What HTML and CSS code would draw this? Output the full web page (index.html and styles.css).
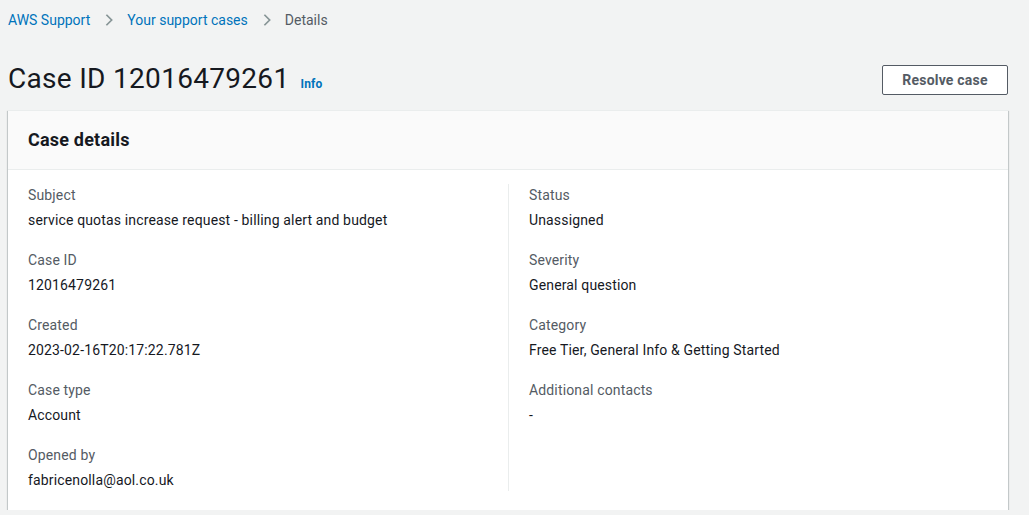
FILE: index.html
```html
<!DOCTYPE html>
<html lang="en">
<head>
<meta charset="utf-8">
<title>Case details</title>
<link rel="stylesheet" href="styles.css">
</head>
<body>
<nav class="breadcrumbs">
  <a class="crumb-link" href="#">AWS Support</a>
  <svg class="crumb-sep" viewBox="0 0 16 16" width="16" height="16"><path d="M5 2l6 6-6 6" fill="none" stroke="currentColor" stroke-width="2"/></svg>
  <a class="crumb-link" href="#">Your support cases</a>
  <svg class="crumb-sep" viewBox="0 0 16 16" width="16" height="16"><path d="M5 2l6 6-6 6" fill="none" stroke="currentColor" stroke-width="2"/></svg>
  <span class="crumb-current">Details</span>
</nav>

<header class="page-header">
  <div class="title-wrap">
    <h1 class="page-title">Case ID 12016479261</h1>
    <a class="info-link" href="#">Info</a>
  </div>
  <button class="btn-normal" type="button">Resolve case</button>
</header>

<section class="card">
  <div class="card-header">
    <h2 class="card-title">Case details</h2>
  </div>
  <div class="card-body">
    <div class="column">
      <div class="field"><div class="label">Subject</div><div class="value">service quotas increase request - billing alert and budget</div></div>
      <div class="field"><div class="label">Case ID</div><div class="value">12016479261</div></div>
      <div class="field"><div class="label">Created</div><div class="value">2023-02-16T20:17:22.781Z</div></div>
      <div class="field"><div class="label">Case type</div><div class="value">Account</div></div>
      <div class="field"><div class="label">Opened by</div><div class="value">fabricenolla@aol.co.uk</div></div>
    </div>
    <div class="column column-divided">
      <div class="field"><div class="label">Status</div><div class="value">Unassigned</div></div>
      <div class="field"><div class="label">Severity</div><div class="value">General question</div></div>
      <div class="field"><div class="label">Category</div><div class="value">Free Tier, General Info &amp; Getting Started</div></div>
      <div class="field"><div class="label">Additional contacts</div><div class="value">-</div></div>
    </div>
  </div>
</section>
</body>
</html>
```

FILE: styles.css
```css
* { box-sizing: border-box; }

html, body {
  margin: 0;
  padding: 0;
  background: #f2f3f3;
}

body {
  font-family: Roboto, "Open Sans", "Liberation Sans", sans-serif;
  font-size: 14px;
  line-height: 22px;
  letter-spacing: 0.15px;
  color: #16191f;
  padding: 0 21px 0 8px;
}

.breadcrumbs {
  display: flex;
  align-items: center;
  height: 40px;
  letter-spacing: 0;
}

.crumb-link {
  color: #0073bb;
  text-decoration: none;
}

.crumb-sep {
  color: #879596;
  margin: 0 11px 0 12px;
  width: 14px;
  height: 14px;
}

.crumb-current {
  color: #545b64;
}

.page-header {
  display: flex;
  justify-content: space-between;
  align-items: flex-start;
  padding-top: 19px;
  height: 70px;
}

.title-wrap {
  display: flex;
  align-items: baseline;
  gap: 11px;
}

.page-title {
  margin: 0;
  font-size: 28px;
  line-height: 40px;
  font-weight: 400;
  letter-spacing: 0.3px;
  color: #16191f;
}

.info-link {
  color: #0073bb;
  font-size: 12px;
  font-weight: 700;
  text-decoration: none;
  letter-spacing: 0.2px;
}

.btn-normal {
  margin-top: 6px;
  width: 126px;
  height: 30px;
  background: #ffffff;
  border: 1px solid #545b64;
  border-radius: 2px;
  color: #545b64;
  font-family: inherit;
  font-size: 14px;
  font-weight: 700;
  letter-spacing: 0.2px;
  padding: 0;
}

.card {
  background: #ffffff;
  box-shadow: 0 1px 1px 0 rgba(0, 28, 36, 0.3), 1px 1px 1px 0 rgba(0, 28, 36, 0.15), -1px 1px 1px 0 rgba(0, 28, 36, 0.15);
  border-top: 1px solid #eaeded;
}

.card-header {
  background: #fafafa;
  border-bottom: 1px solid #eaeded;
  height: 59px;
  display: flex;
  align-items: center;
  padding: 0 20px;
}

.card-title {
  margin: 0;
  font-size: 18px;
  line-height: 22px;
  font-weight: 700;
  letter-spacing: 0.2px;
  color: #16191f;
}

.card-body {
  display: grid;
  grid-template-columns: 1fr 1fr;
  padding: 14px 20px 19px;
}

.column {
  display: flex;
  flex-direction: column;
  gap: 18px;
  padding-right: 20px;
}

.column-divided {
  border-left: 1px solid #eaeded;
  padding-left: 20px;
}

.field {
  display: flex;
  flex-direction: column;
  gap: 3px;
}

.label {
  color: #545b64;
}

.value {
  color: #16191f;
}
```
